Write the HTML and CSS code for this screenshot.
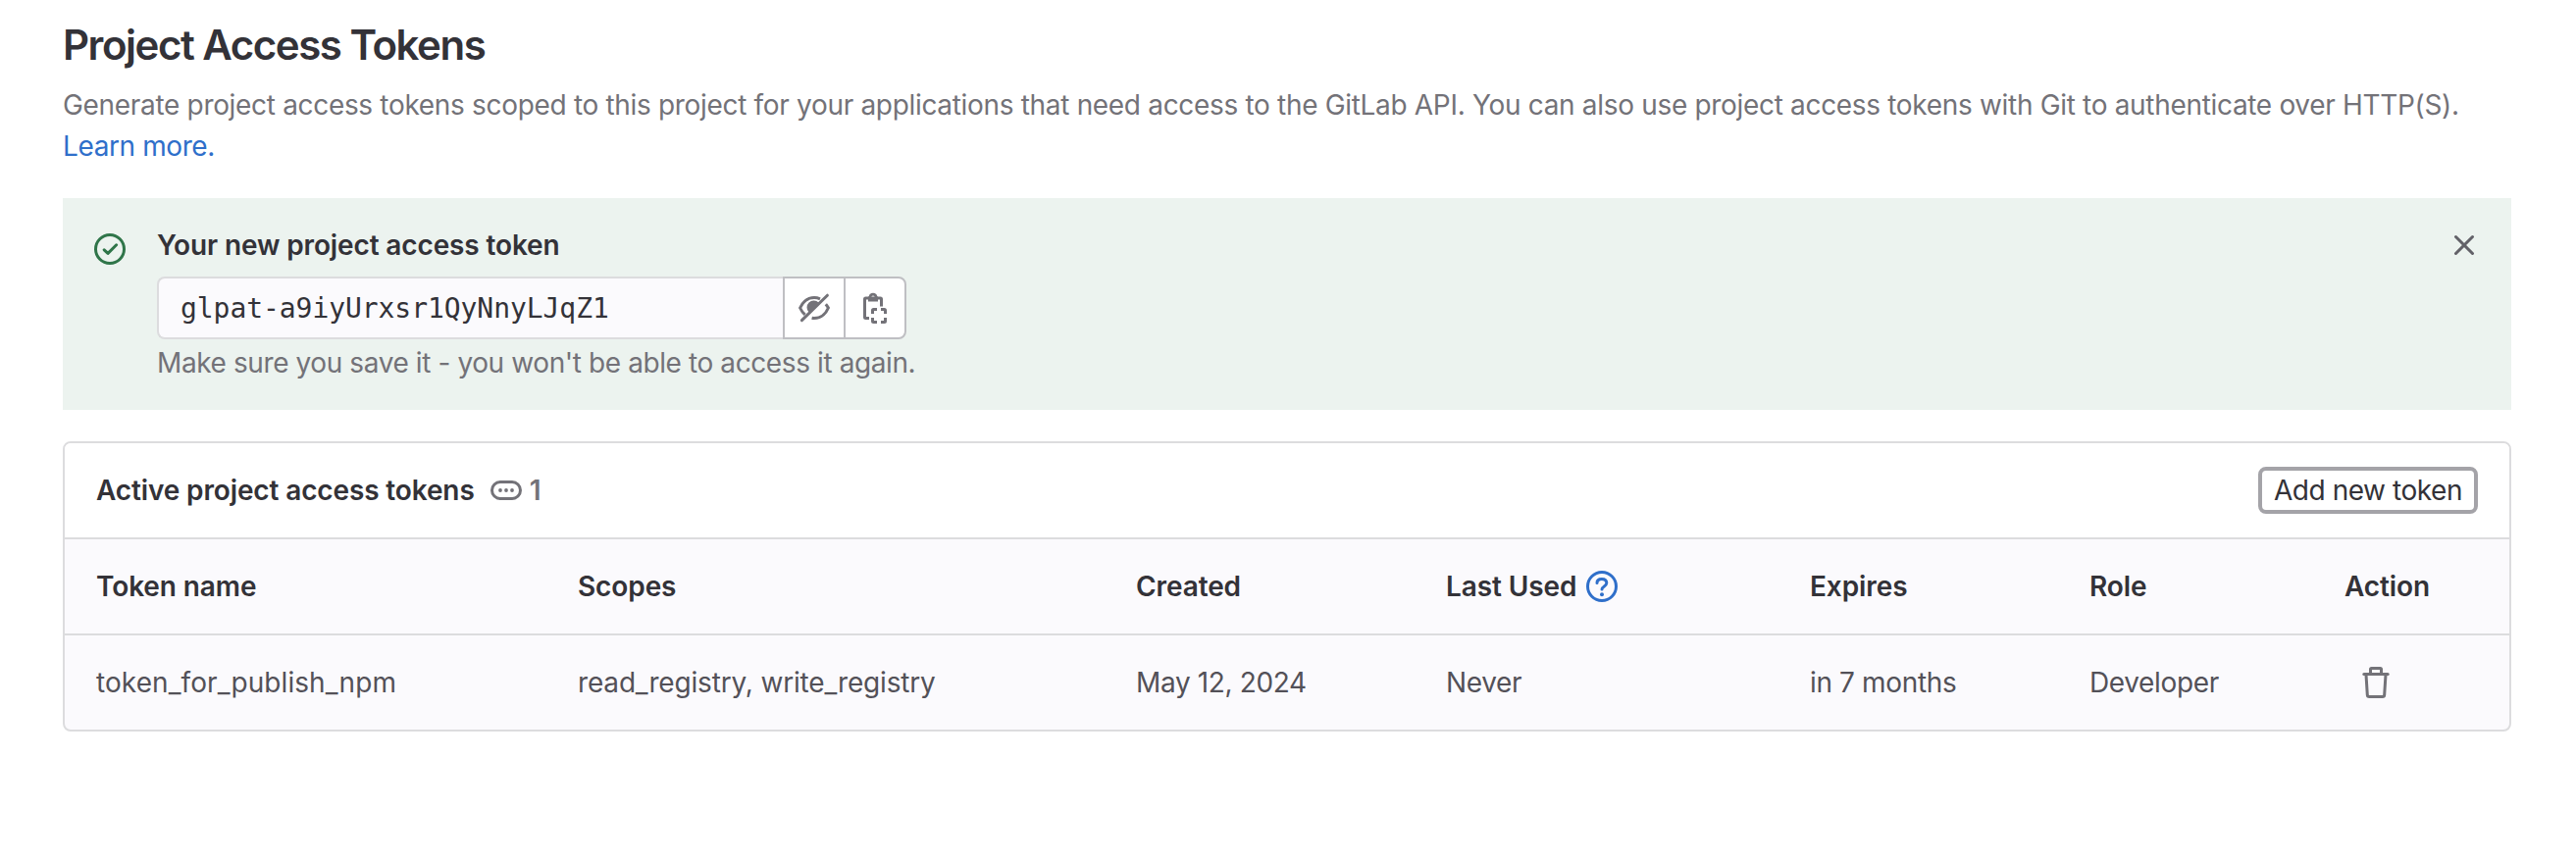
FILE: index.html
```html
<!DOCTYPE html>
<html lang="en">
<head>
<meta charset="utf-8">
<title>Project Access Tokens</title>
<link rel="stylesheet" href="styles.css">
</head>
<body>
<main class="page">
  <h1 class="page-title">Project Access Tokens</h1>
  <p class="page-description">Generate project access tokens scoped to this project for your applications that need access to the GitLab API. You can also use project access tokens with Git to authenticate over HTTP(S).<br><a class="link" href="#">Learn more.</a></p>

  <section class="alert">
    <svg class="icon alert-icon" viewBox="0 0 16 16"><circle cx="8" cy="8" r="7.25"/><path d="M5.1 8.4 7 10.2l4.3-4.3" stroke-linecap="round" stroke-linejoin="round"/></svg>
    <div class="alert-body">
      <h2 class="alert-title">Your new project access token</h2>
      <div class="input-group">
        <div class="token-value">glpat-a9iyUrxsr1QyNnyLJqZ1</div>
        <button class="input-button" aria-label="Hide token">
          <svg class="icon" viewBox="0 0 16 16"><path d="M11 3.4C10.1 3 9.1 2.75 8 2.75 4 2.75 1.7 5.9.8 8c.5 1.1 1.2 2.3 2.5 3.4M13.9 6.1c.6.7 1 1.3 1.3 1.9-.9 2.1-3.2 5.250-7.2 5.250-.4 0-.8 0-1.2-.1"/><path d="m1.7 14.3 13-12.7" stroke-linecap="round"/><path class="fill" d="M5.3 10.3A3 3 0 0 1 10.3 5.3z"/></svg>
        </button>
        <button class="input-button input-button-last" aria-label="Copy token">
          <svg class="icon" viewBox="0 0 16 16"><path d="M5 13.25H3.25a.5.5 0 0 1-.5-.5v-9.3a.5.5 0 0 1 .5-.5h7.5a.5.5 0 0 1 .5.5V7.2"/><path class="fill" fill-rule="evenodd" d="M4.5 4.8V2.2h.3a2.25 2.25 0 0 1 4.4 0h.3v2.6zM7 3.4a.85.85 0 1 0 0-1.7.85.85 0 0 0 0 1.7z"/><path d="M6.75 11V9.25a.5.5 0 0 1 .5-.5H9M11 8.75h1.75a.5.5 0 0 1 .5.5V11M13.25 13v1.75a.5.5 0 0 1-.5.5H11M9 15.25H7.25a.5.5 0 0 1-.5-.5V13"/></svg>
        </button>
      </div>
      <p class="alert-help">Make sure you save it - you won't be able to access it again.</p>
    </div>
    <button class="close" aria-label="Dismiss"><svg class="icon" viewBox="0 0 16 16"><path d="m3.750 3.750 8.500 8.500m0-8.500-8.500 8.500" stroke-linecap="round"/></svg></button>
  </section>

  <section class="card">
    <header class="card-header">
      <h2 class="card-title">Active project access tokens</h2>
      <span class="card-count"><svg class="icon" viewBox="0 0 16 16"><rect x=".75" y="3.75" width="14.5" height="8.5" rx="4.25"/><g class="fill"><circle cx="5" cy="8" r=".95"/><circle cx="8" cy="8" r=".95"/><circle cx="11" cy="8" r=".95"/></g></svg>1</span>
      <button class="add-button">Add new token</button>
    </header>
    <div class="table">
      <div class="row row-head">
        <div>Token name</div>
        <div>Scopes</div>
        <div>Created</div>
        <div class="cell-help">Last Used<svg class="icon help-icon" viewBox="0 0 16 16"><circle cx="8" cy="8" r="7.25"/><path d="M5.5 6.2C5.5 4.9 6.5 4.2 7.9 4.2c1.5 0 2.5.8 2.5 2.1 0 1.6-2.4 1.7-2.4 3.2" stroke-linecap="round"/><circle class="fill" cx="8" cy="12.1" r="1"/></svg></div>
        <div>Expires</div>
        <div>Role</div>
        <div>Action</div>
      </div>
      <div class="row">
        <div class="cell-name">token_for_publish_npm</div>
        <div class="cell-scopes">read_registry, write_registry</div>
        <div>May 12, 2024</div>
        <div>Never</div>
        <div>in 7 months</div>
        <div>Developer</div>
        <div class="cell-action"><svg class="icon" viewBox="0 0 16 16"><path d="M1.9 3.75h12.2" stroke-linecap="round"/><path d="M5.25 3.5V1.25a.5.5 0 0 1 .5-.5h4.5a.5.5 0 0 1 .5.5V3.5M3 4l.65 10.3a1 1 0 0 0 1 .95h6.7a1 1 0 0 0 1-.95L13 4"/></svg></div>
      </div>
    </div>
  </section>
</main>
</body>
</html>
```

FILE: styles.css
```css
* { box-sizing: border-box; }

body {
  margin: 0;
  background: #fff;
  color: #333238;
  font: 28px/42px Inter, "Noto Sans", sans-serif;
}

h1, h2, p { margin: 0; }

button {
  margin: 0;
  padding: 0;
  border: 0;
  background: none;
  color: inherit;
  font: inherit;
}

.page { padding: 20px 66px 0 64px; }

.page-title {
  font-size: 42px;
  font-weight: 600;
  line-height: 52px;
  letter-spacing: -1.47px;
}

.page-description {
  margin-top: 14px;
  color: #737278;
  letter-spacing: -0.32px;
  white-space: nowrap;
}

.link { color: #2f6fca; letter-spacing: -0.4px; text-decoration: none; }

.icon {
  display: block;
  flex: none;
  width: 32px;
  height: 32px;
  fill: none;
  stroke: currentColor;
  stroke-width: 1.5;
}

.fill { fill: currentColor; stroke: none; }

.alert {
  display: flex;
  height: 216px;
  margin-top: 32px;
  padding: 27px 32px;
  background: #ecf3ef;
}

.alert-icon { margin: 9px 32px 0 0; color: #2f7549; }
.alert-body { flex: 1; }

.alert-title,
.card-title {
  font-size: 28px;
  font-weight: 600;
  line-height: 42px;
  letter-spacing: -0.13px;
}

.input-group { display: flex; width: 764px; height: 64px; margin-top: 11px; }

.token-value {
  flex: 1;
  padding: 1px 22px 0;
  border: 2px solid #dcdcde;
  border-right: 0;
  border-radius: 8px 0 0 8px;
  background: #fbfafd;
  font: 28px/60px "DejaVu Sans Mono", monospace;
  letter-spacing: -0.06px;
}

.input-button {
  display: flex;
  align-items: center;
  justify-content: center;
  width: 62px;
  border: 2px solid #bfbfc3;
  border-right: 0;
  background: #fff;
  color: #737278;
}

.input-button-last { width: 64px; border-right: 2px solid #bfbfc3; border-radius: 0 8px 8px 0; }
.alert-help { margin-top: 3px; color: #737278; letter-spacing: -0.4px; }
.close { height: 32px; margin-top: 5px; color: #626168; }

.card {
  margin-top: 32px;
  border: 2px solid #dcdcde;
  border-radius: 8px;
  background: #fbfafd;
  overflow: hidden;
}

.card-header {
  display: flex;
  align-items: center;
  height: 98px;
  padding: 0 32px;
  border-bottom: 2px solid #dcdcde;
  background: #fff;
}

.card-count {
  display: flex;
  align-items: center;
  gap: 8px;
  margin-left: 16px;
  color: #737278;
  font-weight: 600;
}

.add-button {
  width: 224px;
  height: 48px;
  margin-left: auto;
  border: 4px solid #a4a3a8;
  border-radius: 8px;
  background: #fff;
  letter-spacing: -0.45px;
  line-height: 40px;
  white-space: nowrap;
}

.row {
  display: grid;
  grid-template-columns: 491px 569px 316px 371px 285px 260px 1fr;
  align-items: center;
  height: 96px;
  padding-left: 32px;
  color: #535158;
  letter-spacing: -0.36px;
}

.row-head {
  height: 98px;
  border-bottom: 2px solid #dcdcde;
  color: #333238;
  font-weight: 600;
  letter-spacing: -0.1px;
}

.cell-name { letter-spacing: 0.08px; }
.cell-scopes { letter-spacing: -0.17px; }
.cell-help { display: flex; align-items: center; }
.help-icon { margin-left: 10px; color: #2f6fca; }
.cell-action { padding-left: 16px; color: #737278; }
```
